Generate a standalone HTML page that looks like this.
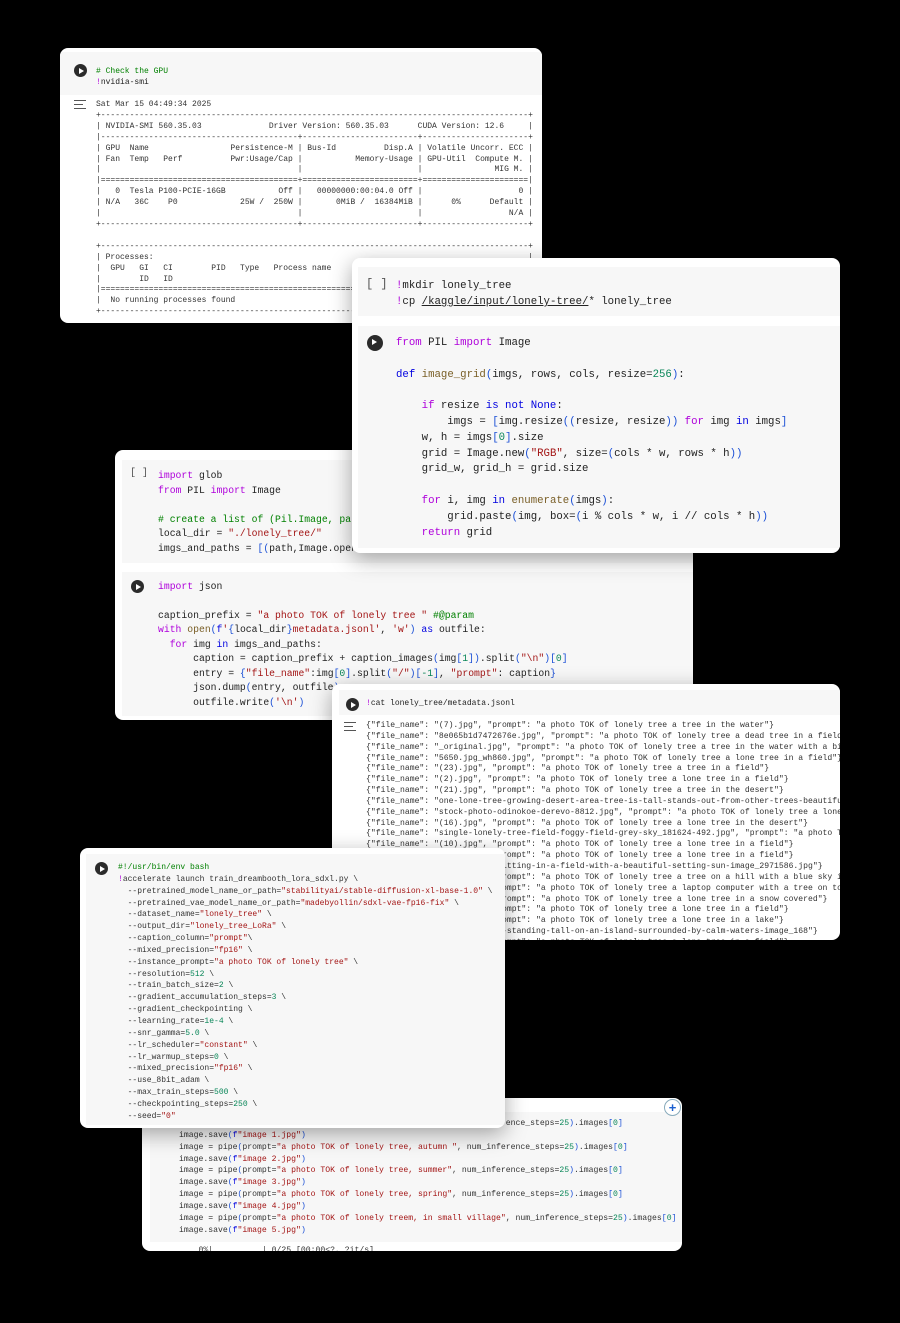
<!DOCTYPE html>
<html><head><meta charset="utf-8"><style>
*{margin:0;padding:0;box-sizing:border-box}
body{width:900px;height:1323px;background:#000;position:relative;overflow:hidden;font-family:"Liberation Mono",monospace;color:#222}
.card{position:absolute;background:#fff;border-radius:8px;overflow:hidden;box-shadow:0 6px 22px rgba(0,0,0,.35)}
.cell{position:absolute;background:#f7f7f7}
pre{position:absolute;font-family:"Liberation Mono",monospace;white-space:pre;margin:0}
.run{position:absolute;width:13px;height:13px;border-radius:50%;background:#2b2b2b}
.run:after{content:"";position:absolute;left:5px;top:3.5px;border-left:5px solid #fff;border-top:3px solid transparent;border-bottom:3px solid transparent}
.ob{position:absolute;color:#555;font-size:11px}
.k{color:#af00db}.b{color:#0000e0}.s{color:#a31515}.n{color:#098658}.c{color:#008000}.f{color:#795e26}.p{color:#1a4fd6}
.oi{position:absolute;width:12px;height:9px}
.oi i{position:absolute;left:0;height:1.2px;background:#555}
</style></head><body>

<!-- Card A -->
<div class="card" style="left:60px;top:48px;width:482px;height:275px">
  <div class="cell" style="left:0;top:4px;width:482px;height:43px"></div>
  <div class="run" style="left:14px;top:16px"></div>
  <pre style="left:36px;top:18px;font-size:8px;line-height:11px"><span class="c"># Check the GPU</span>
<span class="k">!</span>nvidia-smi</pre>
  <div class="oi" style="left:14px;top:52px"><i style="top:0;width:12px"></i><i style="top:4px;width:9px"></i><i style="top:8px;width:12px"></i></div>
  <pre style="left:36px;top:52px;font-size:8px;line-height:10.9px;color:#333">Sat Mar 15 04:49:34 2025
+-----------------------------------------------------------------------------------------+
| NVIDIA-SMI 560.35.03              Driver Version: 560.35.03      CUDA Version: 12.6     |
|-----------------------------------------+------------------------+----------------------+
| GPU  Name                 Persistence-M | Bus-Id          Disp.A | Volatile Uncorr. ECC |
| Fan  Temp   Perf          Pwr:Usage/Cap |           Memory-Usage | GPU-Util  Compute M. |
|                                         |                        |               MIG M. |
|=========================================+========================+======================|
|   0  Tesla P100-PCIE-16GB           Off |   00000000:00:04.0 Off |                    0 |
| N/A   36C    P0             25W /  250W |       0MiB /  16384MiB |      0%      Default |
|                                         |                        |                  N/A |
+-----------------------------------------+------------------------+----------------------+

+-----------------------------------------------------------------------------------------+
| Processes:                                                                              |
|  GPU   GI   CI        PID   Type   Process name                              GPU Memory |
|        ID   ID                                                               Usage      |
|=========================================================================================|
|  No running processes found                                                             |
+-----------------------------------------------------------------------------------------+</pre>
</div>

<!-- Card C -->
<div class="card" style="left:115px;top:450px;width:578px;height:270px">
  <div class="cell" style="left:7px;top:10px;width:571px;height:103px"></div>
  <div class="cell" style="left:7px;top:122px;width:571px;height:144px"></div>
  <div class="ob" style="left:15px;top:18px;font-size:10px">[ ]</div>
  <pre style="left:43px;top:19px;font-size:9.75px;line-height:14.5px"><span class="k">import</span> glob
<span class="k">from</span> PIL <span class="k">import</span> Image

<span class="c"># create a list of (Pil.Image, path) pairs</span>
local_dir = <span class="s">"./lonely_tree/"</span>
imgs_and_paths = <span class="p">[(</span>path,Image.open(path)) for path in glob.glob(f"{local_dir}*.jpg")]</pre>
  <div class="run" style="left:16px;top:130px"></div>
  <pre style="left:43px;top:130px;font-size:9.75px;line-height:14.45px"><span class="k">import</span> json

caption_prefix = <span class="s">"a photo TOK of lonely tree "</span> <span class="c">#@param</span>
<span class="k">with</span> <span class="f">open</span><span class="p">(</span><span class="b">f</span><span class="s">'</span><span class="p">{</span>local_dir<span class="p">}</span><span class="s">metadata.jsonl'</span>, <span class="s">'w'</span><span class="p">)</span> <span class="b">as</span> outfile:
  <span class="k">for</span> img <span class="b">in</span> imgs_and_paths:
      caption = caption_prefix + caption_images<span class="p">(</span>img<span class="p">[</span><span class="n">1</span><span class="p">])</span>.split<span class="p">(</span><span class="s">"\n"</span><span class="p">)[</span><span class="n">0</span><span class="p">]</span>
      entry = <span class="p">{</span><span class="s">"file_name"</span>:img<span class="p">[</span><span class="n">0</span><span class="p">]</span>.split<span class="p">(</span><span class="s">"/"</span><span class="p">)[</span><span class="n">-1</span><span class="p">]</span>, <span class="s">"prompt"</span>: caption<span class="p">}</span>
      json.dump<span class="p">(</span>entry, outfile<span class="p">)</span>
      outfile.write<span class="p">(</span><span class="s">'\n'</span><span class="p">)</span></pre>
</div>

<!-- Card B -->
<div class="card" style="left:352px;top:258px;width:488px;height:295px">
  <div class="cell" style="left:6px;top:9px;width:482px;height:49px"></div>
  <div class="cell" style="left:6px;top:68px;width:482px;height:222px"></div>
  <div class="ob" style="left:14px;top:19px;font-size:12px">[ ]</div>
  <pre style="left:44px;top:20px;font-size:10.7px;line-height:16px"><span class="k">!</span>mkdir lonely_tree
<span class="k">!</span>cp <u>/kaggle/input/lonely-tree/</u>* lonely_tree</pre>
  <div class="run" style="left:15px;top:77px;width:16px;height:16px"></div>
  <pre style="left:44px;top:78px;font-size:10.7px;line-height:15.8px"><span class="k">from</span> PIL <span class="k">import</span> Image

<span class="b">def</span> <span class="f">image_grid</span><span class="p">(</span>imgs, rows, cols, resize=<span class="n">256</span><span class="p">)</span>:

    <span class="k">if</span> resize <span class="b">is not None</span>:
        imgs = <span class="p">[</span>img.resize<span class="p">((</span>resize, resize<span class="p">))</span> <span class="k">for</span> img <span class="b">in</span> imgs<span class="p">]</span>
    w, h = imgs<span class="p">[</span><span class="n">0</span><span class="p">]</span>.size
    grid = Image.new<span class="p">(</span><span class="s">"RGB"</span>, size=<span class="p">(</span>cols * w, rows * h<span class="p">))</span>
    grid_w, grid_h = grid.size

    <span class="k">for</span> i, img <span class="b">in</span> <span class="f">enumerate</span><span class="p">(</span>imgs<span class="p">)</span>:
        grid.paste<span class="p">(</span>img, box=<span class="p">(</span>i % cols * w, i // cols * h<span class="p">))</span>
    <span class="k">return</span> grid</pre>
</div>

<!-- Card D -->
<div class="card" style="left:332px;top:684px;width:508px;height:256px">
  <div class="cell" style="left:7px;top:6px;width:501px;height:25px"></div>
  <div class="run" style="left:14px;top:14px"></div>
  <pre style="left:34px;top:15px;font-size:8px;line-height:10px"><span class="k">!</span>cat lonely_tree/metadata.jsonl</pre>
  <div class="oi" style="left:12px;top:38px"><i style="top:0;width:12px"></i><i style="top:4px;width:9px"></i><i style="top:8px;width:12px"></i></div>
  <pre style="left:34px;top:37px;font-size:8.1px;line-height:10.85px;color:#333">{"file_name": "(7).jpg", "prompt": "a photo TOK of lonely tree a tree in the water"}
{"file_name": "8e065b1d7472676e.jpg", "prompt": "a photo TOK of lonely tree a dead tree in a field with a"}
{"file_name": "_original.jpg", "prompt": "a photo TOK of lonely tree a tree in the water with a bird"}
{"file_name": "5650.jpg_wh860.jpg", "prompt": "a photo TOK of lonely tree a lone tree in a field"}
{"file_name": "(23).jpg", "prompt": "a photo TOK of lonely tree a tree in a field"}
{"file_name": "(2).jpg", "prompt": "a photo TOK of lonely tree a lone tree in a field"}
{"file_name": "(21).jpg", "prompt": "a photo TOK of lonely tree a tree in the desert"}
{"file_name": "one-lone-tree-growing-desert-area-tree-is-tall-stands-out-from-other-trees-beautiful.jpg"}
{"file_name": "stock-photo-odinokoe-derevo-8812.jpg", "prompt": "a photo TOK of lonely tree a lone tree"}
{"file_name": "(16).jpg", "prompt": "a photo TOK of lonely tree a lone tree in the desert"}
{"file_name": "single-lonely-tree-field-foggy-field-grey-sky_181624-492.jpg", "prompt": "a photo TOK"}
{"file_name": "(10).jpg", "prompt": "a photo TOK of lonely tree a lone tree in a field"}
{"file_name": "(11).jpg", "prompt": "a photo TOK of lonely tree a lone tree in a field"}
{"file_name": "lonely-tree-sitting-in-a-field-with-a-beautiful-setting-sun-image_2971586.jpg"}
{"file_name": "tree.jpg", "prompt": "a photo TOK of lonely tree a tree on a hill with a blue sky in"}
{"file_name": "(3).jpg", "prompt": "a photo TOK of lonely tree a laptop computer with a tree on top"}
{"file_name": "snow.jpg", "prompt": "a photo TOK of lonely tree a lone tree in a snow covered"}
{"file_name": "(5).jpg", "prompt": "a photo TOK of lonely tree a lone tree in a field"}
{"file_name": "(6).jpg", "prompt": "a photo TOK of lonely tree a lone tree in a lake"}
{"file_name": "solitary-tree-standing-tall-on-an-island-surrounded-by-calm-waters-image_168"}
{"file_name": "(8).jpg", "prompt": "a photo TOK of lonely tree a lone tree in a field"}</pre>
</div>

<!-- Card F -->
<div class="card" style="left:142px;top:1098px;width:540px;height:153px">
  <div class="cell" style="left:8px;top:14px;width:532px;height:130px"></div>
  <div style="position:absolute;left:522px;top:1px;width:17px;height:17px;border-radius:50%;border:1px solid #8ab;background:#fff;color:#1a5fd0;font:bold 13px/15px 'Liberation Sans',sans-serif;text-align:center">+</div>
  <pre style="left:37px;top:20px;font-size:8.15px;line-height:11.85px;color:#333">image = pipe<span class="p">(</span>prompt=<span class="s">"a photo TOK of lonely tree, winter"</span>, num_inference_steps=<span class="n">25</span><span class="p">)</span>.images<span class="p">[</span><span class="n">0</span><span class="p">]</span>
image.save<span class="p">(</span><span class="b">f</span><span class="s">"image 1.jpg"</span><span class="p">)</span>
image = pipe<span class="p">(</span>prompt=<span class="s">"a photo TOK of lonely tree, autumn "</span>, num_inference_steps=<span class="n">25</span><span class="p">)</span>.images<span class="p">[</span><span class="n">0</span><span class="p">]</span>
image.save<span class="p">(</span><span class="b">f</span><span class="s">"image 2.jpg"</span><span class="p">)</span>
image = pipe<span class="p">(</span>prompt=<span class="s">"a photo TOK of lonely tree, summer"</span>, num_inference_steps=<span class="n">25</span><span class="p">)</span>.images<span class="p">[</span><span class="n">0</span><span class="p">]</span>
image.save<span class="p">(</span><span class="b">f</span><span class="s">"image 3.jpg"</span><span class="p">)</span>
image = pipe<span class="p">(</span>prompt=<span class="s">"a photo TOK of lonely tree, spring"</span>, num_inference_steps=<span class="n">25</span><span class="p">)</span>.images<span class="p">[</span><span class="n">0</span><span class="p">]</span>
image.save<span class="p">(</span><span class="b">f</span><span class="s">"image 4.jpg"</span><span class="p">)</span>
image = pipe<span class="p">(</span>prompt=<span class="s">"a photo TOK of lonely treem, in small village"</span>, num_inference_steps=<span class="n">25</span><span class="p">)</span>.images<span class="p">[</span><span class="n">0</span><span class="p">]</span>
image.save<span class="p">(</span><span class="b">f</span><span class="s">"image 5.jpg"</span><span class="p">)</span></pre>
  <pre style="left:37px;top:148px;font-size:8.15px;line-height:10px;color:#333">    0%|          | 0/25 [00:00&lt;?, ?it/s]</pre>
</div>

<!-- Card E -->
<div class="card" style="left:80px;top:848px;width:425px;height:280px">
  <div class="cell" style="left:6px;top:6px;width:419px;height:271px"></div>
  <div class="run" style="left:15px;top:14px"></div>
  <pre style="left:38px;top:14px;font-size:8px;line-height:11.85px;color:#333"><span class="c">#!/usr/bin/env bash</span>
<span class="k">!</span>accelerate launch train_dreambooth_lora_sdxl.py \
  --pretrained_model_name_or_path=<span class="s">"stabilityai/stable-diffusion-xl-base-1.0"</span> \
  --pretrained_vae_model_name_or_path=<span class="s">"madebyollin/sdxl-vae-fp16-fix"</span> \
  --dataset_name=<span class="s">"lonely_tree"</span> \
  --output_dir=<span class="s">"lonely_tree_LoRa"</span> \
  --caption_column=<span class="s">"prompt"</span>\
  --mixed_precision=<span class="s">"fp16"</span> \
  --instance_prompt=<span class="s">"a photo TOK of lonely tree"</span> \
  --resolution=<span class="n">512</span> \
  --train_batch_size=<span class="n">2</span> \
  --gradient_accumulation_steps=<span class="n">3</span> \
  --gradient_checkpointing \
  --learning_rate=<span class="n">1e-4</span> \
  --snr_gamma=<span class="n">5.0</span> \
  --lr_scheduler=<span class="s">"constant"</span> \
  --lr_warmup_steps=<span class="n">0</span> \
  --mixed_precision=<span class="s">"fp16"</span> \
  --use_8bit_adam \
  --max_train_steps=<span class="n">500</span> \
  --checkpointing_steps=<span class="n">250</span> \
  --seed=<span class="s">"0"</span></pre>
</div>

</body></html>
